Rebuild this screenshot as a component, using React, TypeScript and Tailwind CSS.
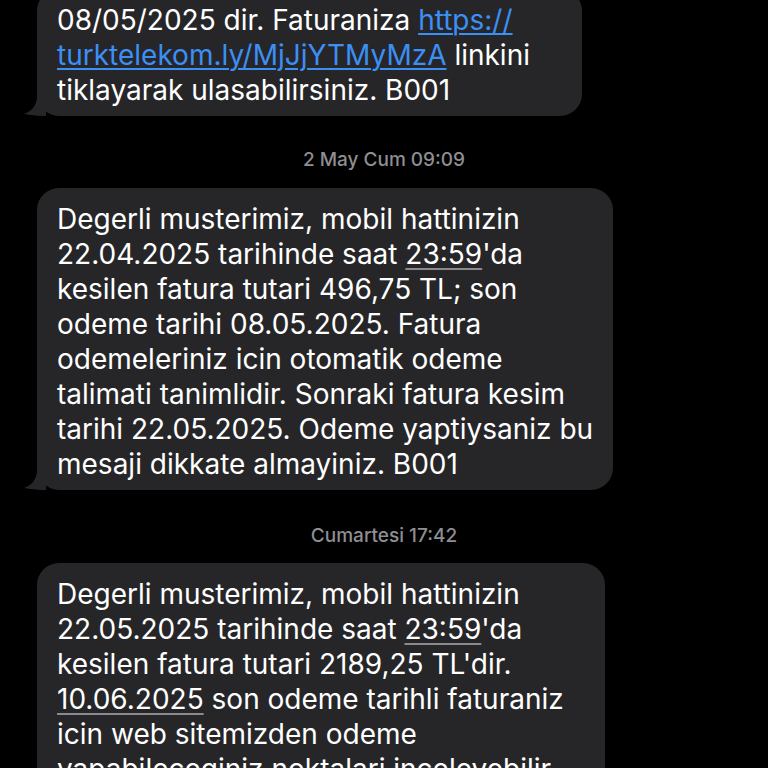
import React from "react";

type Seg = { t: string; k?: "link" | "u" };
type Line = Seg[];

const msg1: Line[] = [
  [{ t: "08/05/2025 dir. Faturaniza " }, { t: "https://", k: "link" }],
  [{ t: "turktelekom.ly/MjJjYTMyMzA", k: "link" }, { t: " linkini" }],
  [{ t: "tiklayarak ulasabilirsiniz. B001" }],
];

const msg2: Line[] = [
  [{ t: "Degerli musterimiz, mobil hattinizin" }],
  [{ t: "22.04.2025 tarihinde saat " }, { t: "23:59", k: "u" }, { t: "'da" }],
  [{ t: "kesilen fatura tutari 496,75 TL; son" }],
  [{ t: "odeme tarihi 08.05.2025. Fatura" }],
  [{ t: "odemeleriniz icin otomatik odeme" }],
  [{ t: "talimati tanimlidir. Sonraki fatura kesim" }],
  [{ t: "tarihi 22.05.2025. Odeme yaptiysaniz bu" }],
  [{ t: "mesaji dikkate almayiniz. B001" }],
];

const msg3: Line[] = [
  [{ t: "Degerli musterimiz, mobil hattinizin" }],
  [{ t: "22.05.2025 tarihinde saat " }, { t: "23:59", k: "u" }, { t: "'da" }],
  [{ t: "kesilen fatura tutari 2189,25 TL'dir." }],
  [{ t: "10.06.2025", k: "u" }, { t: " son odeme tarihli faturaniz" }],
  [{ t: "icin web sitemizden odeme" }],
  [{ t: "yapabileceginiz noktalari inceleyebilir" }],
];

const Tail = () => (
  <svg
    className="absolute left-[-13px] bottom-0"
    width="26"
    height="22"
    viewBox="0 0 26 22"
  >
    <path d="M13 0 L22 0 L22 22 C16 22 9 21.5 0 20 C8 17 12 12 13 4 Z" fill="#262628" />
  </svg>
);

const Bubble = ({ lines, width, tail = true }: { lines: Line[]; width: string; tail?: boolean }) => (
  <div className={`relative ml-[37px] ${width} rounded-[22px] bg-[#262628] pl-[20px] pr-[16px] pt-[14px] pb-[8px]`}>
    {tail && <Tail />}
    <div className="relative text-[28px] leading-[35px] text-white">
      {lines.map((line, i) => (
        <div key={i} className="whitespace-nowrap">
          {line.map((s, j) =>
            s.k === "link" ? (
              <span key={j} className="text-[#3b8ff5] underline decoration-[#3b8ff5] decoration-[1.5px] underline-offset-[3px]">
                {s.t}
              </span>
            ) : s.k === "u" ? (
              <span key={j} className="underline decoration-[#8a8a8e] decoration-[1.5px] underline-offset-[4px]">
                {s.t}
              </span>
            ) : (
              <span key={j}>{s.t}</span>
            )
          )}
        </div>
      ))}
    </div>
  </div>
);

const Stamp = ({ children }: { children: React.ReactNode }) => (
  <div className="text-center text-[19px] font-medium leading-[20px] text-[#8e8e93]">{children}</div>
);

export default function App() {
  return (
    <div
      className="h-[768px] w-[768px] overflow-hidden bg-black"
      style={{ fontFamily: "Inter, 'Liberation Sans', sans-serif" }}
    >
      <div className="-mt-[11px] flex flex-col">
        <Bubble lines={msg1} width="w-[545px]" />
        <div className="pt-[34px] pb-[18px]">
          <Stamp>2 May Cum 09:09</Stamp>
        </div>
        <Bubble lines={msg2} width="w-[576px]" />
        <div className="pt-[36px] pb-[17px]">
          <Stamp>Cumartesi 17:42</Stamp>
        </div>
        <Bubble lines={msg3} width="w-[568px]" tail={false} />
      </div>
    </div>
  );
}
